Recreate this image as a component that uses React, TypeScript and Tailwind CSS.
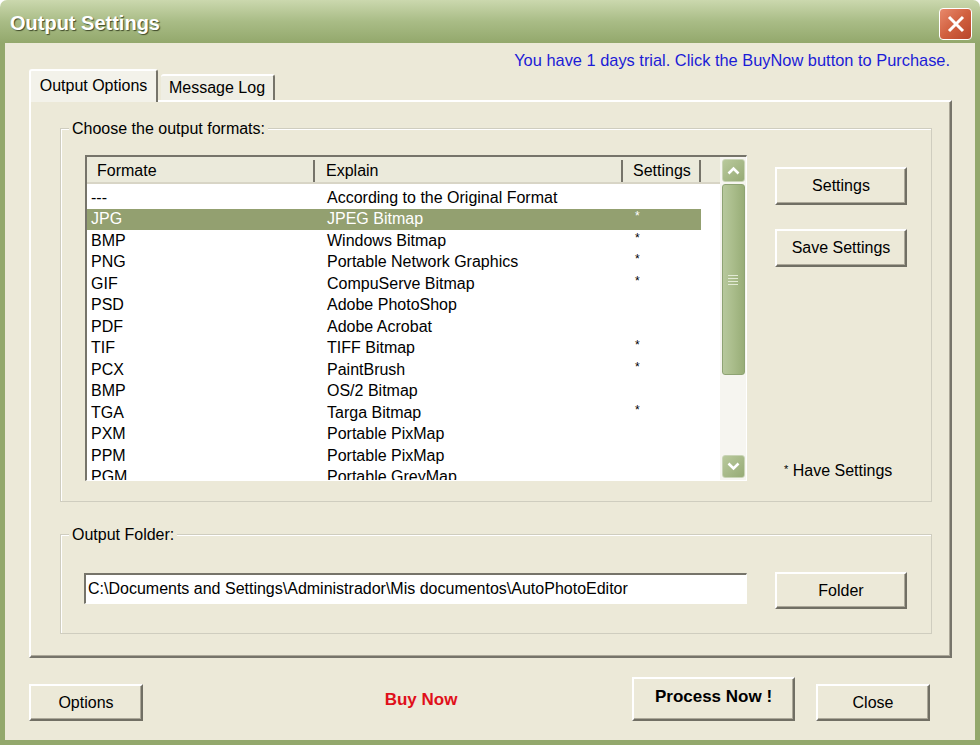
import type { ReactNode } from 'react';

const ROWS: [string, string, string][] = [
  ['---', 'According to the Original Format', ''],
  ['JPG', 'JPEG Bitmap', '*'],
  ['BMP', 'Windows Bitmap', '*'],
  ['PNG', 'Portable Network Graphics', '*'],
  ['GIF', 'CompuServe Bitmap', '*'],
  ['PSD', 'Adobe PhotoShop', ''],
  ['PDF', 'Adobe Acrobat', ''],
  ['TIF', 'TIFF Bitmap', '*'],
  ['PCX', 'PaintBrush', '*'],
  ['BMP', 'OS/2 Bitmap', ''],
  ['TGA', 'Targa Bitmap', '*'],
  ['PXM', 'Portable PixMap', ''],
  ['PPM', 'Portable PixMap', ''],
  ['PGM', 'Portable GreyMap', ''],
];

function XpButton({ children, className = '' }: { children: ReactNode; className?: string }) {
  return (
    <button
      className={`flex items-center justify-center border-2 border-t-white border-l-white border-r-[#716f64] border-b-[#716f64] bg-[#ece9d8] text-[16px] text-black shadow-[inset_-1px_-1px_0_#aca899] ${className}`}
    >
      {children}
    </button>
  );
}

function ScrollArrow({ up }: { up?: boolean }) {
  return (
    <div className="flex h-[23px] w-[23px] items-center justify-center rounded-[3px] border border-[#c9d4b6] bg-gradient-to-br from-[#b9c99c] to-[#97ab76]">
      <svg width="13" height="9" viewBox="0 0 13 9">
        <path
          d={up ? 'M1.5 7.5 L6.5 2.5 L11.5 7.5' : 'M1.5 1.5 L6.5 6.5 L11.5 1.5'}
          stroke="white"
          strokeWidth="2.6"
          fill="none"
        />
      </svg>
    </div>
  );
}

function ListView() {
  return (
    <div className="flex h-[326px] w-[662px] border-t-2 border-l-2 border-t-[#76746a] border-l-[#76746a] border-b border-r border-b-white border-r-white bg-white">
      <div className="flex w-[634px] flex-col overflow-hidden">
        <div className="flex h-[27px] shrink-0 items-stretch border-b-2 border-[#d8d5c6] bg-[#ebeadb] pt-[3px] text-[16px]">
          <div className="flex w-[228px] items-center border-r-2 border-[#76746a] pl-[10px]">Formate</div>
          <div className="flex w-[308px] items-center border-r-2 border-[#76746a] pl-[11px]">Explain</div>
          <div className="flex w-[78px] items-center border-r-2 border-[#76746a] pl-[10px]">Settings</div>
          <div className="flex-1" />
        </div>
        <div className="flex flex-col pt-[3px]">
          {ROWS.map(([fmt, explain, set], i) => (
            <div
              key={i}
              className={`flex h-[21.5px] w-[614px] shrink-0 items-center text-[16px] leading-none ${
                i === 1 ? 'bg-[#93a070] text-white' : 'text-black'
              }`}
            >
              <span className="w-[240px] pl-[4px]">{fmt}</span>
              <span className="w-[308px]">{explain}</span>
              <span className="pl-[0px] pb-[6px] text-[12px]">{set}</span>
            </div>
          ))}
        </div>
      </div>
      <div className="flex w-[26px] flex-col items-center bg-[#f6f5f0] pt-[2px] pb-[2px]">
        <ScrollArrow up />
        <div className="mt-[2px] flex h-[191px] w-[23px] items-center justify-center rounded-[3px] border border-[#8ea373] bg-gradient-to-r from-[#b7c89c] via-[#a9bc8a] to-[#98ad77]">
          <div className="flex flex-col gap-[2px]">
            <div className="h-[1px] w-[10px] bg-[#e2ead4]" />
            <div className="h-[1px] w-[10px] bg-[#e2ead4]" />
            <div className="h-[1px] w-[10px] bg-[#e2ead4]" />
            <div className="h-[1px] w-[10px] bg-[#e2ead4]" />
          </div>
        </div>
        <div className="flex-1" />
        <ScrollArrow />
      </div>
    </div>
  );
}

export default function App() {
  return (
    <div className="flex h-[745px] w-[980px] flex-col overflow-hidden bg-white font-['Liberation_Sans',Arial,sans-serif] text-black">
      <div className="flex h-[43px] shrink-0 items-center justify-between rounded-t-[7px] bg-gradient-to-b from-[#cbd8ae] via-[#a9bc86] to-[#93a86c] pl-[10px] pr-[8px]">
        <span className="pt-[3px] text-[20px] font-bold text-white [text-shadow:1px_1px_1px_#3f4a2a]">Output Settings</span>
        <div className="mt-[4px] flex h-[32px] w-[33px] items-center justify-center rounded-[4px] border border-white bg-gradient-to-br from-[#e8896c] via-[#d1603f] to-[#b8452a]">
          <svg width="20" height="20" viewBox="0 0 20 20">
            <path d="M3 3 L17 17 M17 3 L3 17" stroke="white" strokeWidth="3" />
          </svg>
        </div>
      </div>

      <div className="flex flex-1 flex-col border-x-[5px] border-b-[5px] border-[#93a86c] bg-[#ece9d8]">
        <div className="flex justify-end pt-[8px] pr-[25px] text-[16.4px] leading-[18px] text-[#1c1cd6]">
          You have 1 days trial. Click the BuyNow button to Purchase.
        </div>

        <div className="ml-[24px] flex items-end">
          <div className="relative z-10 -mb-[2px] flex h-[33px] w-[129px] items-start justify-center rounded-t-[3px] border-t-2 border-l-2 border-r-2 border-t-white border-l-white border-r-[#76746a] bg-[#f3f2ea] pt-[3px] text-[16px]">
            Output Options
          </div>
          <div className="ml-[3px] flex h-[26px] w-[114px] items-center justify-center rounded-t-[3px] border-t-2 border-r-2 border-t-white border-r-[#76746a] bg-[#efeee4] text-[16px]">
            Message Log
          </div>
        </div>

        <div className="ml-[24px] flex h-[558px] w-[923px] flex-col border-2 border-t-white border-l-white border-r-[#76746a] border-b-[#76746a] shadow-[inset_-1px_-1px_0_#aca899]">
          <div className="relative ml-[29px] mt-[26px] h-[374px] w-[872px] border border-[#cfcdbf] shadow-[inset_1px_1px_0_#fff]">
            <span className="absolute -top-[9px] left-[8px] bg-[#ece9d8] px-[3px] text-[16px] leading-[18px]">
              Choose the output formats:
            </span>
            <div className="flex items-start pl-[24px] pt-[26px]">
              <ListView />
              <div className="ml-[28px] mt-[12px] flex h-[314px] w-[132px] flex-col">
                <XpButton className="h-[38px] w-[132px]">Settings</XpButton>
                <XpButton className="mt-[24px] h-[38px] w-[132px]">Save Settings</XpButton>
                <div className="mt-auto pl-[9px] text-[16px] leading-[18px]">
                  <span className="relative -top-[3px] text-[11px]">*</span> Have Settings
                </div>
              </div>
            </div>
          </div>

          <div className="relative ml-[29px] mt-[32px] h-[100px] w-[872px] border border-[#cfcdbf] shadow-[inset_1px_1px_0_#fff]">
            <span className="absolute -top-[9px] left-[8px] bg-[#ece9d8] px-[3px] text-[16px] leading-[18px]">
              Output Folder:
            </span>
            <div className="flex items-start pl-[23px] pt-[37px]">
              <div className="mt-[1px] flex h-[31px] w-[663px] items-center border-t-2 border-l-2 border-t-[#76746a] border-l-[#76746a] border-b border-r border-b-white border-r-white bg-white pl-[2px] text-[16px]">
                C:\Documents and Settings\Administrador\Mis documentos\AutoPhotoEditor
              </div>
              <XpButton className="ml-[28px] h-[37px] w-[132px]">Folder</XpButton>
            </div>
          </div>
        </div>

        <div className="mt-[19px] flex items-end">
          <XpButton className="ml-[24px] h-[37px] w-[114px]">Options</XpButton>
          <div className="ml-[200px] w-[156px] self-center pt-[2px] text-center text-[17px] font-bold text-[#e0101a]">Buy Now</div>
          <XpButton className="ml-[133px] h-[44px] w-[163px] pb-[4px] !text-[17px] font-bold">Process Now !</XpButton>
          <XpButton className="ml-[21px] h-[37px] w-[114px]">Close</XpButton>
        </div>
      </div>
    </div>
  );
}
